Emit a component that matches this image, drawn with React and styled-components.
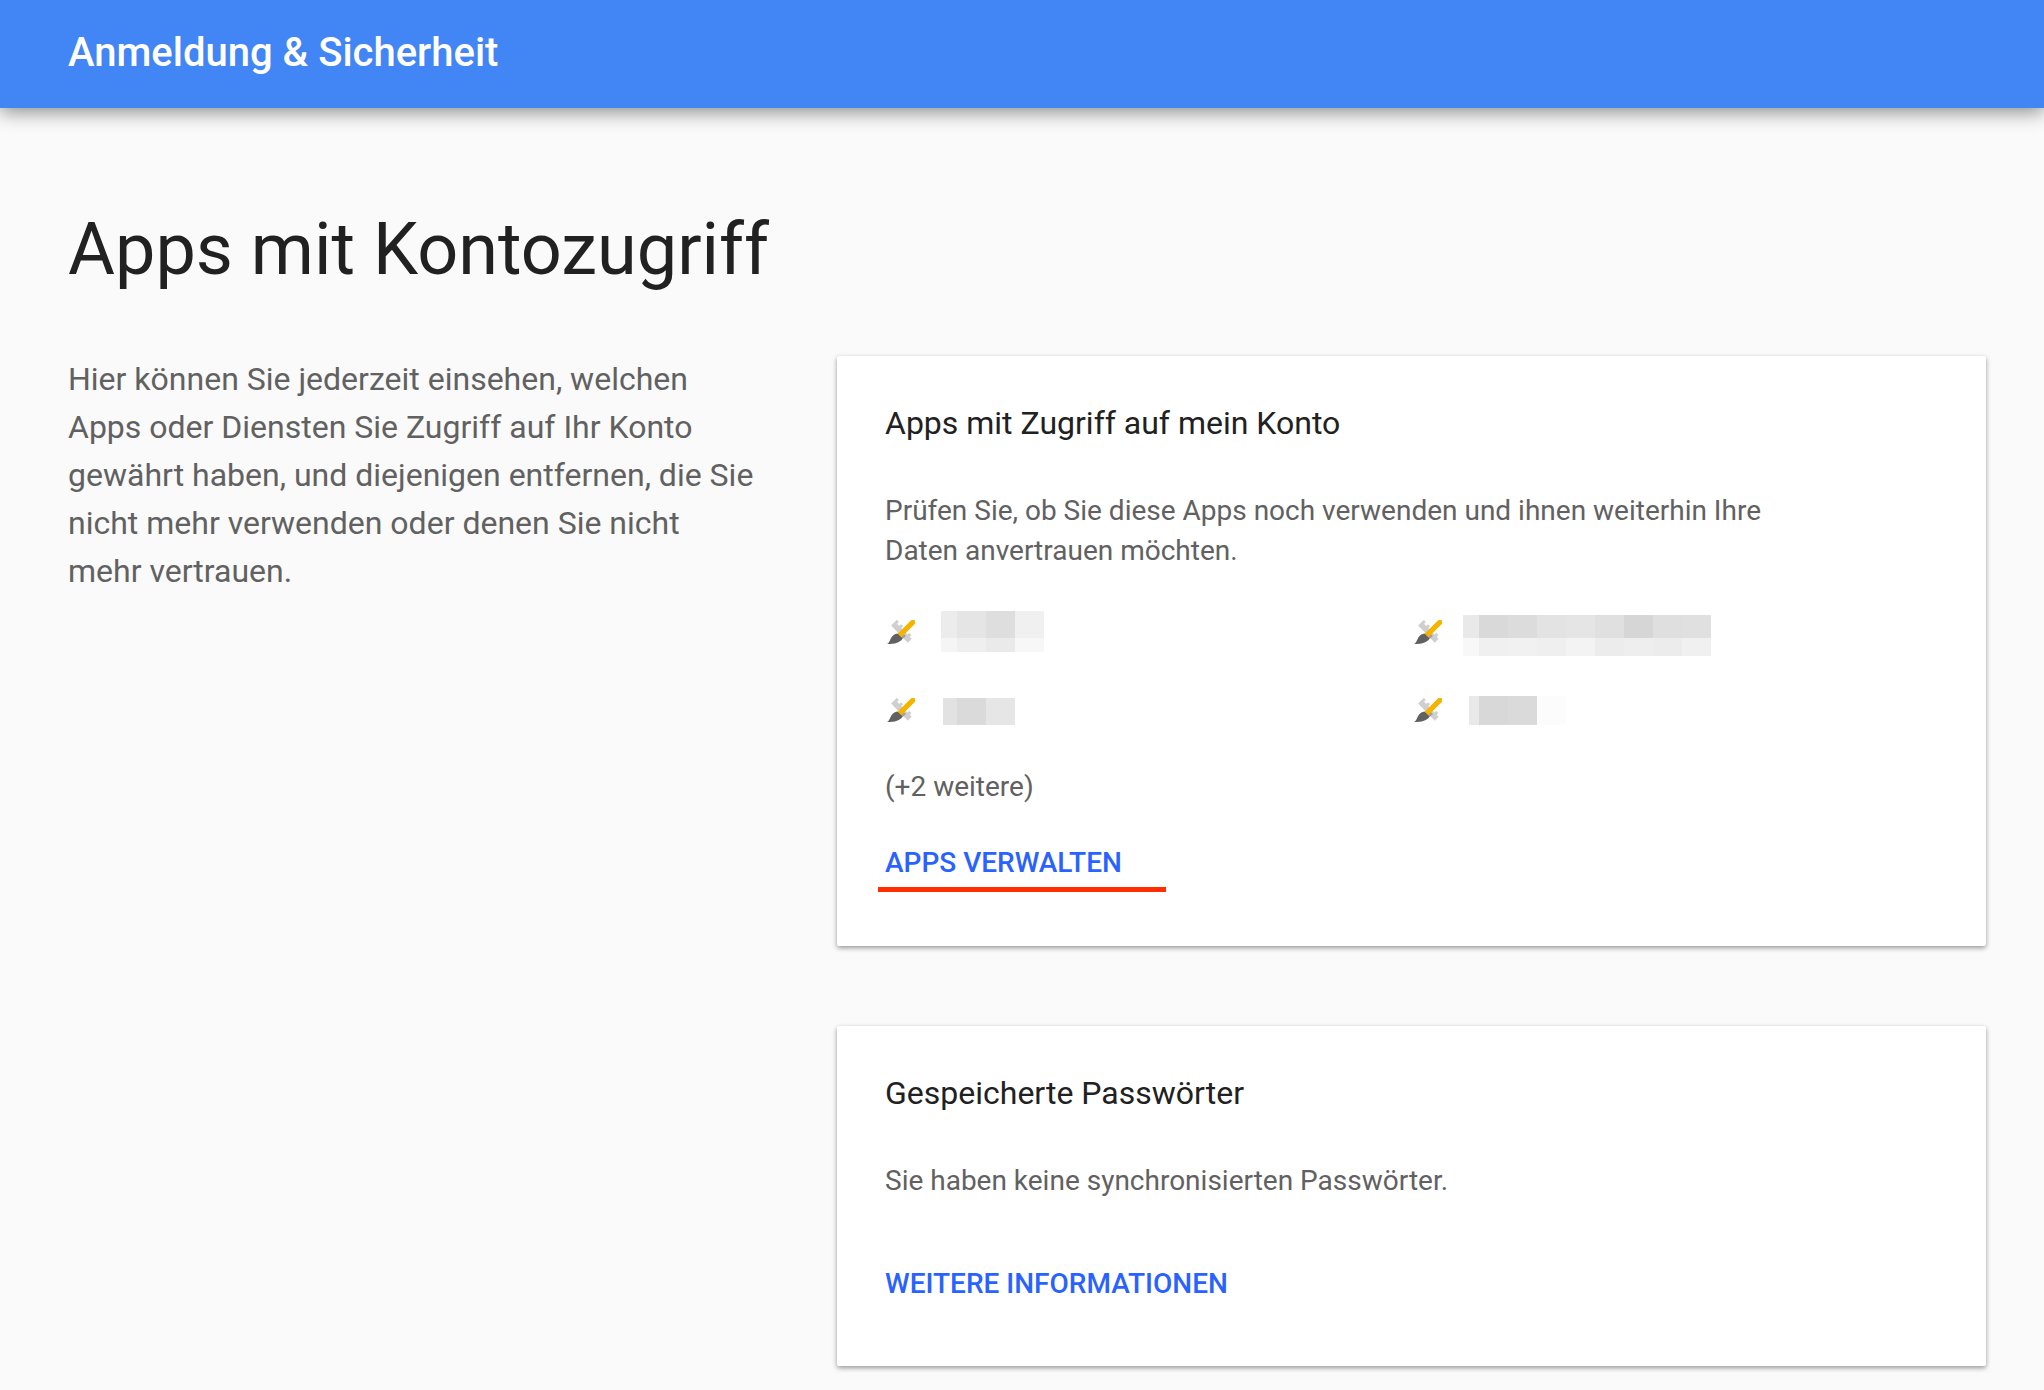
import React from 'react'
import styled, { createGlobalStyle } from 'styled-components'

const GlobalStyle = createGlobalStyle`
    html, body {
        margin: 0;
        padding: 0;
        background: #fafafa;
        font-family: Roboto, "Liberation Sans", sans-serif;
    }
`

// the app names are pixelated in the screenshot, so each one is a small grid of grey cells
const apps = [
    {
        id: 1, left: 26, top: 0, cols: [16, 29, 29, 29], rows: [27, 14],
        tones: ['#ececec', '#e5e5e5', '#dedede', '#f0f0f0', '#f5f5f5', '#efefef', '#eaeaea', '#f7f7f7'],
    },
    {
        id: 3, left: 21, top: 4, cols: [16, 29, 29, 29, 29, 29, 29, 29, 29], rows: [23, 18],
        tones: ['#e9e9e9', '#d9d9d9', '#dcdcdc', '#e3e3e3', '#e5e5e5', '#e0e0e0', '#d6d6d6', '#dfdfdf', '#e0e0e0',
            '#f8f8f8', '#f0f0f0', '#f1f1f1', '#efefef', '#f3f3f3', '#ececec', '#eeeeee', '#ececec', '#f0f0f0'],
    },
    {
        id: 2, left: 28, top: 9, cols: [14, 29, 29], rows: [27],
        tones: ['#e2e2e2', '#dadada', '#e6e6e6'],
    },
    {
        id: 4, left: 27, top: 7, cols: [10, 29, 29, 29], rows: [29],
        tones: ['#e9e9e9', '#d8d8d8', '#dadada', '#fcfcfc'],
    },
]

function AppIcon() {
    return (
        <IconBox viewBox="0 0 28 24" width="28" height="24">
            <g transform="rotate(46 16 12)" fill="#cfcfcf">
                <path d="M3 8h3v2.5h3V8h3v2.5h3V8h3v2.5h3V8h3v2.5h3V16H3z" />
            </g>
            <path d="M14 11.5l5 4.5-3.5 3-4.5-4z" fill="#a0a0a0" />
            <path d="M26 2.2 12.4 15.6" stroke="#f4b400" strokeWidth="5.2" strokeLinecap="round" fill="none" />
            <path d="M10.4 13.4l5.2 5C13.2 22.4 8 24 0 24c3.8-1.8 2.6-9 10.4-10.6z" fill="#616161" />
        </IconBox>
    )
}

function App() {
    return (
        <>
            <GlobalStyle />
            <Header>Anmeldung &amp; Sicherheit</Header>
            <Main>
                <PageTitle>Apps mit Kontozugriff</PageTitle>
                <Columns>
                    <Intro>
                        Hier können Sie jederzeit einsehen, welchen Apps oder Diensten Sie Zugriff auf Ihr Konto
                        gewährt haben, und diejenigen entfernen, die Sie nicht mehr verwenden oder denen Sie nicht
                        mehr vertrauen.
                    </Intro>
                    <Cards>
                        <Card $height={590}>
                            <CardTitle>Apps mit Zugriff auf mein Konto</CardTitle>
                            <CardText>
                                Prüfen Sie, ob Sie diese Apps noch verwenden und ihnen weiterhin Ihre Daten anvertrauen möchten.
                            </CardText>
                            <AppGrid>
                                {apps.map(app => (
                                    <AppRow key={app.id}>
                                        <AppIcon />
                                        <Blur
                                            $left={app.left}
                                            $top={app.top}
                                            $cols={app.cols.map(c => c + 'px').join(' ')}
                                            $rows={app.rows.map(r => r + 'px').join(' ')}
                                        >
                                            {app.tones.map((tone, i) => <BlurCell key={i} $tone={tone} />)}
                                        </Blur>
                                    </AppRow>
                                ))}
                            </AppGrid>
                            <MoreText>(+2 weitere)</MoreText>
                            <LinkWrap>
                                <CardLink href="#">Apps verwalten</CardLink>
                                <RedMark />
                            </LinkWrap>
                        </Card>
                        <Card $height={340}>
                            <CardTitle>Gespeicherte Passwörter</CardTitle>
                            <CardText>Sie haben keine synchronisierten Passwörter.</CardText>
                            <BottomLink>
                                <CardLink href="#">Weitere Informationen</CardLink>
                            </BottomLink>
                        </Card>
                    </Cards>
                </Columns>
            </Main>
        </>
    )
}

const Header = styled.header`
    height: 108px;
    padding: 0 0 3px 68px;
    box-sizing: border-box;
    display: flex;
    align-items: center;
    background: #4285f4;
    color: #fff;
    font-size: 40px;
    font-weight: 500;
    box-shadow: 0 4px 18px rgba(0, 0, 0, .45);
`

const Main = styled.main`
    height: 1282px;
    padding: 98px 58px 0 68px;
    box-sizing: border-box;
    overflow: hidden;
`

const PageTitle = styled.h1`
    margin: 0;
    font-size: 72px;
    line-height: 88px;
    font-weight: 400;
    color: #212121;
`

const Columns = styled.div`
    display: flex;
    margin-top: 62px;
`

const Intro = styled.p`
    width: 690px;
    margin: -1px 79px 0 0;
    font-size: 32px;
    line-height: 48px;
    color: #616161;
`

const Cards = styled.div`
    width: 1149px;
    display: flex;
    flex-direction: column;
    gap: 80px;
`

const Card = styled.section`
    height: ${p => p.$height}px;
    box-sizing: border-box;
    padding: 47px 48px 0;
    background: #fff;
    border-radius: 2px;
    box-shadow: 0 2px 5px rgba(0, 0, 0, .4);
    display: flex;
    flex-direction: column;
`

const CardTitle = styled.h2`
    margin: 0;
    font-size: 32px;
    line-height: 40px;
    font-weight: 400;
    color: #212121;
`

const CardText = styled.p`
    width: 900px;
    margin: 48px 0 0;
    font-size: 28px;
    line-height: 40px;
    color: #616161;
`

const AppGrid = styled.div`
    display: grid;
    grid-template-columns: 527px 1fr;
    grid-auto-rows: 78px;
    margin-top: 40px;
`

const AppRow = styled.div`
    display: flex;
    align-items: flex-start;
`

const IconBox = styled.svg`
    flex: none;
    margin: 9px 0 0 2px;
`

const Blur = styled.div`
    display: grid;
    grid-template-columns: ${p => p.$cols};
    grid-template-rows: ${p => p.$rows};
    margin: ${p => p.$top}px 0 0 ${p => p.$left}px;
`

const BlurCell = styled.div`
    background: ${p => p.$tone};
`

const MoreText = styled.p`
    margin: 0;
    font-size: 28px;
    line-height: 40px;
    color: #616161;
`

const LinkWrap = styled.div`
    position: relative;
    margin-top: 36px;
`

const CardLink = styled.a`
    display: inline-block;
    font-size: 28px;
    line-height: 40px;
    font-weight: 500;
    text-transform: uppercase;
    text-decoration: none;
    color: #2962ff;
`

const RedMark = styled.div`
    position: absolute;
    left: -7px;
    top: 44px;
    width: 288px;
    height: 5px;
    background: #ff2d00;
`

const BottomLink = styled.div`
    margin-top: 63px;
`

export default App
